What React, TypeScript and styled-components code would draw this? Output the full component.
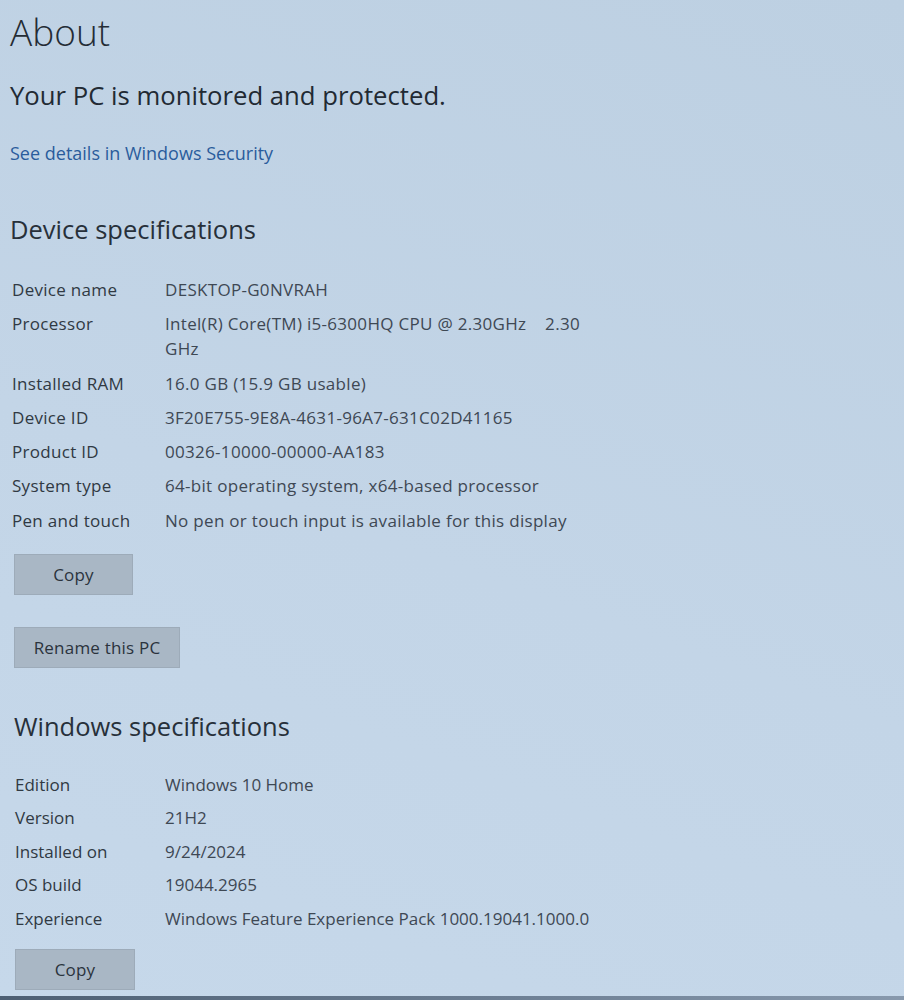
import React from 'react';
import styled, { createGlobalStyle } from 'styled-components';

const GlobalStyle = createGlobalStyle`
  html, body {
    margin: 0;
    padding: 0;
    height: 100%;
  }
  body {
    background: linear-gradient(200deg, #bdd0e2 0%, #c3d5e7 55%, #c6d8ea 100%);
    font-family: 'Open Sans', 'Noto Sans', sans-serif;
    color: #28313b;
  }
`;

const Page = styled.div`
  position: relative;
  width: 904px;
  height: 1000px;
  overflow: hidden;
  box-sizing: border-box;
  padding: 8px 0 0 10px;
`;

const Title = styled.h1`
  margin: 0;
  font-size: 37px;
  font-weight: 300;
  line-height: 48px;
  color: #242c35;
`;

const Status = styled.p`
  margin: 23px 0 0;
  font-size: 25.7px;
  font-weight: 400;
  line-height: 34px;
  color: #222a33;
`;

const Link = styled.a`
  display: inline-block;
  margin-top: 28px;
  font-size: 18px;
  line-height: 24px;
  color: #2a5c9c;
  text-decoration: none;
`;

const SectionTitle = styled.h2<{ $indent?: number }>`
  margin: 0;
  padding-left: ${(p) => p.$indent ?? 0}px;
  font-size: 25.5px;
  font-weight: 400;
  line-height: 34px;
  color: #27303a;
`;

const Section = styled.section<{ $top: number }>`
  margin-top: ${(p) => p.$top}px;
`;

const SpecList = styled.dl<{
  $indent: number;
  $gap: number;
  $top: number;
  $labelWidth: number;
  $spacing: number;
}>`
  display: grid;
  grid-template-columns: ${(p) => p.$labelWidth}px 460px;
  row-gap: ${(p) => p.$gap}px;
  margin: ${(p) => p.$top}px 0 0;
  padding-left: ${(p) => p.$indent}px;
  font-size: 17px;
  letter-spacing: ${(p) => p.$spacing}px;
  line-height: 25px;
`;

const Label = styled.dt`
  margin: 0;
  color: #303943;
`;

const Value = styled.dd`
  margin: 0;
  color: #3e4854;
  white-space: nowrap;
`;

const Button = styled.button<{ $width: number; $top: number; $indent: number }>`
  display: block;
  width: ${(p) => p.$width}px;
  height: 41px;
  margin: ${(p) => p.$top}px 0 0 ${(p) => p.$indent}px;
  padding: 0;
  border: 1px solid #9dabb9;
  background: #a9b7c5;
  font-family: 'Open Sans', 'Noto Sans', sans-serif;
  font-size: 17px;
  letter-spacing: 0.2px;
  color: #2b333d;
  cursor: pointer;
`;

const BottomEdge = styled.div`
  position: absolute;
  left: 0;
  right: 0;
  bottom: 0;
  height: 4px;
  background: linear-gradient(90deg, #4d5f73, #6f8196 60%, #8899ad);
`;

type Spec = [string, React.ReactNode];

const device: Spec[] = [
  ['Device name', 'DESKTOP-G0NVRAH'],
  [
    'Processor',
    <>
      Intel(R) Core(TM) i5-6300HQ CPU @ 2.30GHz&nbsp;&nbsp;&nbsp;&nbsp;2.30
      <br />
      GHz
    </>,
  ],
  ['Installed RAM', '16.0 GB (15.9 GB usable)'],
  ['Device ID', '3F20E755-9E8A-4631-96A7-631C02D41165'],
  ['Product ID', '00326-10000-00000-AA183'],
  ['System type', '64-bit operating system, x64-based processor'],
  ['Pen and touch', 'No pen or touch input is available for this display'],
];

const windows: Spec[] = [
  ['Edition', 'Windows 10 Home'],
  ['Version', '21H2'],
  ['Installed on', '9/24/2024'],
  ['OS build', '19044.2965'],
  ['Experience', 'Windows Feature Experience Pack 1000.19041.1000.0'],
];

type SpecsProps = {
  items: Spec[];
  indent: number;
  gap: number;
  top: number;
  labelWidth: number;
  spacing: number;
};

const Specs = ({ items, indent, gap, top, labelWidth, spacing }: SpecsProps) => (
  <SpecList
    $indent={indent}
    $gap={gap}
    $top={top}
    $labelWidth={labelWidth}
    $spacing={spacing}
  >
    {items.map(([label, value]) => (
      <React.Fragment key={label}>
        <Label>{label}</Label>
        <Value>{value}</Value>
      </React.Fragment>
    ))}
  </SpecList>
);

export default function App() {
  return (
    <>
      <GlobalStyle />
      <Page>
        <Title>About</Title>
        <Status>Your PC is monitored and protected.</Status>
        <Link href="#">See details in Windows Security</Link>

        <Section $top={47}>
          <SectionTitle>Device specifications</SectionTitle>
          <Specs
            items={device}
            indent={2}
            gap={9.3}
            top={31}
            labelWidth={153}
            spacing={0.3}
          />
          <Button $width={119} $top={21} $indent={4}>
            Copy
          </Button>
          <Button $width={166} $top={32} $indent={4}>
            Rename this PC
          </Button>
        </Section>

        <Section $top={41}>
          <SectionTitle $indent={4}>Windows specifications</SectionTitle>
          <Specs
            items={windows}
            indent={5}
            gap={8.5}
            top={29}
            labelWidth={150}
            spacing={0}
          />
          <Button $width={120} $top={18} $indent={5}>
            Copy
          </Button>
        </Section>

        <BottomEdge />
      </Page>
    </>
  );
}
